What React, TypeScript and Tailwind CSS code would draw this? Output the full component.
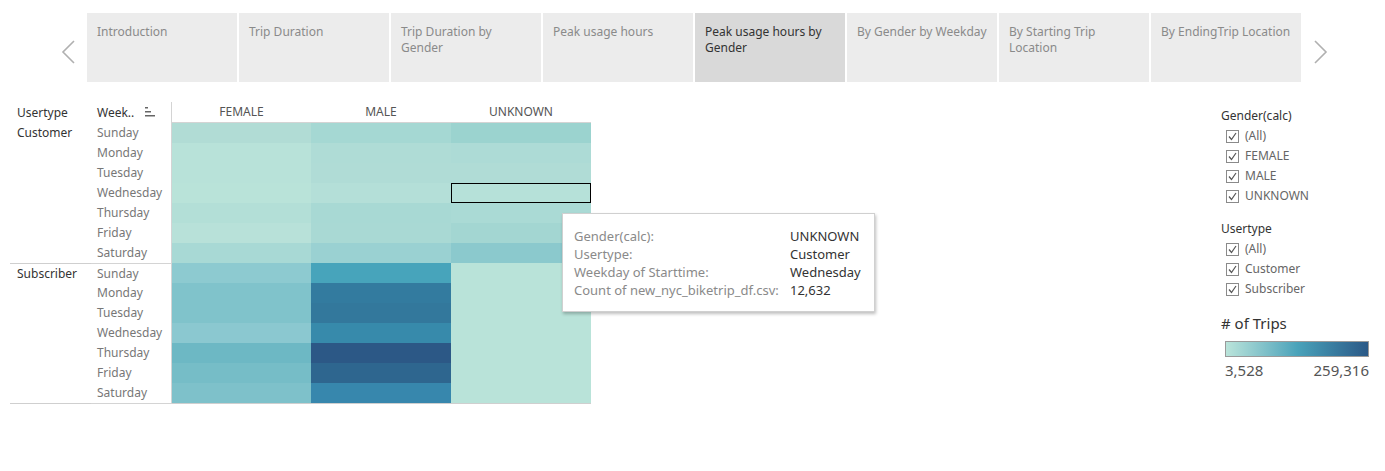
import React from "react";

const tabs = [
  "Introduction",
  "Trip Duration",
  "Trip Duration by Gender",
  "Peak usage hours",
  "Peak usage hours by Gender",
  "By Gender by Weekday",
  "By Starting Trip Location",
  "By EndingTrip Location",
];

const days = ["Sunday", "Monday", "Tuesday", "Wednesday", "Thursday", "Friday", "Saturday"];

// colours per weekday: FEMALE, MALE, UNKNOWN
const groups = [
  {
    name: "Customer",
    cells: [
      ["#b1dcd5", "#a5d8d3", "#9bd3cf"],
      ["#b8e2d9", "#afdcd6", "#addbd6"],
      ["#b8e2d9", "#b0dcd6", "#b0dcd6"],
      ["#b9e3d9", "#b4dfd8", "#b6e1d9"],
      ["#b3dfd7", "#a8d9d4", "#aadad5"],
      ["#b8e1d9", "#a9d9d4", "#a3d6d2"],
      ["#a8d9d5", "#9ad1d2", "#8bc9cd"],
    ],
  },
  {
    name: "Subscriber",
    cells: [
      ["#8dcad0", "#47a4bb", "#b9e3d9"],
      ["#80c3cb", "#337b9f", "#b9e3d9"],
      ["#80c3cb", "#33789c", "#b9e3d9"],
      ["#8bc8d0", "#378aab", "#b9e3d9"],
      ["#6db8c4", "#2c5886", "#b9e3d9"],
      ["#76bdc7", "#2e668f", "#b9e3d9"],
      ["#7ec1ca", "#3787ad", "#b9e3d9"],
    ],
  },
];

function Chevron({ dir }: { dir: "left" | "right" }) {
  return (
    <svg width="16" height="24" viewBox="0 0 16 24" className="shrink-0">
      <polyline
        points={dir === "left" ? "13,1 2,12 13,23" : "3,1 14,12 3,23"}
        fill="none"
        stroke="#b0b0b0"
        strokeWidth="1.6"
      />
    </svg>
  );
}

function Check({ label }: { label: string }) {
  return (
    <div className="flex items-center h-[20px] pl-[5px]">
      <div className="w-[13px] h-[13px] border border-[#8a8a8a] bg-white flex items-center justify-center">
        <svg width="11" height="11" viewBox="0 0 11 11">
          <polyline points="2,5.5 4.5,8.5 9,2" fill="none" stroke="#555" strokeWidth="1.2" />
        </svg>
      </div>
      <span className="ml-[6px] text-[12px] text-[#666]">{label}</span>
    </div>
  );
}

export default function App() {
  return (
    <div
      className="w-[1385px] h-[471px] bg-white overflow-hidden"
      style={{ fontFamily: '"Noto Sans", "Liberation Sans", sans-serif' }}
    >
      {/* story tabs */}
      <div className="flex items-start pt-[13px]">
        <div className="w-[87px] pl-[61px] pt-[27px]">
          <Chevron dir="left" />
        </div>
        <div className="flex gap-[2px]">
          {tabs.map((t, i) => (
            <div
              key={t}
              className={
                "w-[150px] h-[69px] pl-[10px] pr-[6px] pt-[11px] text-[12px] leading-[16px] " +
                (i === 4 ? "bg-[#d9d9d9] text-[#333]" : "bg-[#ececec] text-[#8a8a8a]")
              }
            >
              {t}
            </div>
          ))}
        </div>
        <div className="pl-[11px] pt-[27px]">
          <Chevron dir="right" />
        </div>
      </div>

      <div className="flex mt-[20px]">
        {/* crosstab */}
        <div className="relative ml-[10px] w-[581px] text-[12px] leading-[20px]">
          <div className="grid grid-cols-[81px_81px_139px_140px_140px]">
            <div className="h-[21px] pl-[7px] text-[#333] leading-[21px]">Usertype</div>
            <div className="h-[21px] border-r border-[#d4d4d4] pl-[6px] text-[#333] leading-[21px] flex items-start">
              <span>Week..</span>
              <svg width="11" height="10" viewBox="0 0 11 10" className="ml-[11px] mt-[5px]">
                <rect x="0" y="0" width="3" height="1.5" fill="#666" />
                <rect x="0" y="4" width="6" height="1.5" fill="#666" />
                <rect x="0" y="8" width="10" height="1.5" fill="#666" />
              </svg>
            </div>
            {["FEMALE", "MALE", "UNKNOWN"].map((g) => (
              <div key={g} className="h-[21px] border-b border-[#d4d4d4] text-center text-[#555] leading-[20px]">
                {g}
              </div>
            ))}

            {groups.map((grp, gi) =>
              grp.cells.map((row, ri) => {
                const sep = gi === 1 && ri === 0;
                const last = gi === 1 && ri === 6;
                const h = sep ? " h-[19px] leading-[19px]" : " h-[20px]";
                const line = sep ? " border-t border-[#cfcfcf]" : last ? " border-b border-[#cfcfcf]" : "";
                return (
                  <React.Fragment key={grp.name + ri}>
                    <div className={"pl-[7px] text-[#333] box-content" + h + line}>
                      {ri === 0 ? grp.name : ""}
                    </div>
                    <div className={"pl-[6px] text-[#777] border-r border-[#d4d4d4] box-content" + h + line}>
                      {days[ri]}
                    </div>
                    {row.map((c, ci) => (
                      <div
                        key={ci}
                        className={
                          "box-content" +
                          h +
                          (last ? " border-b border-[#cfcfcf]" : "") +
                          (sep ? " border-t border-transparent" : "")
                        }
                        style={{ backgroundColor: c }}
                      >
                        {gi === 0 && ri === 3 && ci === 2 ? (
                          <div className="h-full w-full border border-black" />
                        ) : null}
                      </div>
                    ))}
                  </React.Fragment>
                );
              })
            )}
          </div>

          {/* tooltip */}
          <div className="absolute left-[552px] top-[111px] w-[313px] h-[99px] bg-white border border-[#d0d0d0] shadow-[1px_2px_3px_rgba(0,0,0,0.25)] pl-[11px] pt-[13px] text-[13px] leading-[18px]">
            <div className="grid grid-cols-[216px_auto]">
              <span className="text-[#8a8a8a]">Gender(calc):</span>
              <span className="text-[#333]">UNKNOWN</span>
              <span className="text-[#8a8a8a]">Usertype:</span>
              <span className="text-[#333]">Customer</span>
              <span className="text-[#8a8a8a]">Weekday of Starttime:</span>
              <span className="text-[#333]">Wednesday</span>
              <span className="text-[#8a8a8a] whitespace-nowrap">Count of new_nyc_biketrip_df.csv:</span>
              <span className="text-[#333]">12,632</span>
            </div>
          </div>
        </div>

        {/* filters & legend */}
        <div className="ml-auto w-[164px] pt-[4px]">
          <div className="text-[12px] leading-[20px] text-[#333]">Gender(calc)</div>
          <Check label="(All)" />
          <Check label="FEMALE" />
          <Check label="MALE" />
          <Check label="UNKNOWN" />

          <div className="mt-[13px] text-[12px] leading-[20px] text-[#333]">Usertype</div>
          <Check label="(All)" />
          <Check label="Customer" />
          <Check label="Subscriber" />

          <div className="mt-[13px] text-[15px] leading-[22px] text-[#333]"># of Trips</div>
          <div className="mt-[7px] ml-[4px] w-[144px] h-[16px] border border-[#9a9a9a] bg-gradient-to-r from-[#bae4da] via-[#4aa3ba] to-[#2b5987]" />
          <div className="mt-[4px] ml-[4px] w-[144px] flex justify-between text-[15px] leading-[18px] text-[#555]">
            <span>3,528</span>
            <span>259,316</span>
          </div>
        </div>
      </div>
    </div>
  );
}
